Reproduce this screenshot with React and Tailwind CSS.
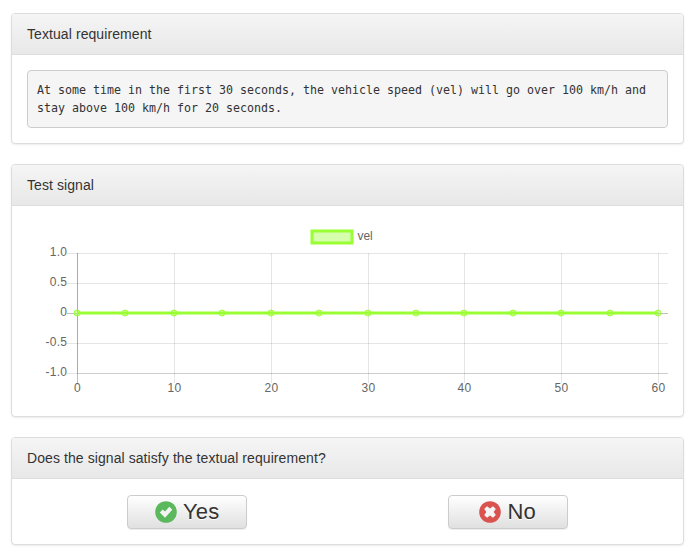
const X_TICKS = [0, 10, 20, 30, 40, 50, 60];
const Y_TICKS = ['1.0', '0.5', '0', '-0.5', '-1.0'];
const POINTS = Array.from({ length: 13 }, (_, i) => i * 5);
const px = (value) => Math.round(50 + (value * 581) / 60);

function Panel({ title, className = '', children }) {
  return (
    <section className={`overflow-hidden rounded border border-[#ddd] bg-white shadow-[0_1px_2px_rgba(0,0,0,0.075)] ${className}`}>
      <h2 className="h-[41px] border-b border-[#ddd] bg-linear-to-b from-[#f5f5f5] to-[#e8e8e8] px-[15px] py-[10px] text-[14px] leading-5 tracking-[0.08px]">
        {title}
      </h2>
      {children}
    </section>
  );
}

function SignalChart() {
  return (
    <svg width="641" height="180" className="block text-[12px]" fill="#666">
      <rect x="285" y="10" width="40" height="12" fill="rgba(153,255,51,0.4)" stroke="#99ff33" strokeWidth="3" />
      <text x="330.4" y="19">vel</text>
      {Y_TICKS.map((label, i) => (
        <g key={label}>
          <path d={`M40 ${32.5 + i * 30}H641`} stroke={label === '0' ? 'rgba(0,0,0,0.25)' : 'rgba(0,0,0,0.1)'} />
          <text x="40.3" y={35 + i * 30} textAnchor="end" className="tracking-[0.3px]">{label}</text>
        </g>
      ))}
      {X_TICKS.map((t) => (
        <g key={t}>
          <path d={`M${px(t) + 0.5} 32V162`} stroke={t === 0 ? 'rgba(0,0,0,0.25)' : 'rgba(0,0,0,0.1)'} />
          <text x={px(t) + 0.5} y="171" textAnchor="middle" className="tracking-[0.3px]">{t}</text>
        </g>
      ))}
      <path d="M50.5 32V152M50 152.5H641" stroke="rgba(0,0,0,0.1)" fill="none" />
      <path d="M50 92H631" stroke="#99ff33" strokeWidth="3" />
      {POINTS.map((p) => (
        <circle key={p} cx={px(p)} cy="92" r="3" fill="rgba(153,255,51,0.4)" stroke="#99ff33" />
      ))}
    </svg>
  );
}

function AnswerButton({ label, color, children }) {
  return (
    <button className="flex h-[34px] w-[120px] items-center justify-center gap-[6px] rounded border border-[#ccc] bg-linear-to-b from-white to-[#e0e0e0] text-[22px] leading-none shadow-[inset_0_1px_0_rgba(255,255,255,0.15),0_1px_1px_rgba(0,0,0,0.075)] [text-shadow:0_1px_0_#fff]">
      <svg width="22" height="22" viewBox="0 0 22 22">
        <circle cx="11" cy="11" r="10.8" fill={color} />
        {children}
      </svg>
      <span className="tracking-[0.2px]">{label}</span>
    </button>
  );
}

export default function App() {
  return (
    <main className="flex h-[557px] w-[698px] flex-col gap-5 bg-white pt-[13px] pl-[11px] font-['Liberation_Sans',Arial,sans-serif] text-[#333]">
      <Panel title="Textual requirement" className="h-[131px] w-[673px]">
        <div className="p-[15px]">
          <pre className="h-[58px] rounded border border-[#ccc] bg-[#f5f5f5] px-[9px] py-[10px] font-['DejaVu_Sans_Mono',monospace] text-[11.63px] leading-[18px]">
            {'At some time in the first 30 seconds, the vehicle speed (vel) will go over 100 km/h and\nstay above 100 km/h for 20 seconds.'}
          </pre>
        </div>
      </Panel>
      <Panel title="Test signal" className="h-[253px] w-[673px]">
        <div className="p-[15px]">
          <SignalChart />
        </div>
      </Panel>
      <Panel title="Does the signal satisfy the textual requirement?" className="h-[108px] w-[673px]">
        <div className="grid grid-cols-2 justify-items-center px-[15px] pt-4">
          <AnswerButton label="Yes" color="#5cb85c">
            <path d="M4.8 11.5L7.7 8.6L10 10.6L14.3 5.8L17.3 8.8L10 16.8Z" fill="#f4f4f4" />
          </AnswerButton>
          <AnswerButton label="No" color="#d9534f">
            <path d="M8 5.2L11 7.4L14 5.2L16.8 8L14.6 11L16.8 14L14 16.8L11 14.6L8 16.8L5.2 14L7.4 11L5.2 8Z" fill="#f4f4f4" />
          </AnswerButton>
        </div>
      </Panel>
    </main>
  );
}
